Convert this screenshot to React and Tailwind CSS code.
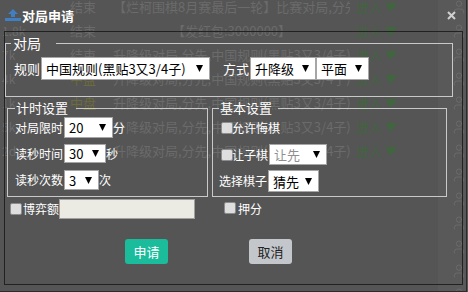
import { User } from "lucide-react";

const bgRows = [
    { lvl: "", st: "结束", desc: "【烂柯围棋8月赛最后一轮】比赛对局,分先" },
    { lvl: "1.8k", st: "结束", desc: "【发红包:3000000】" },
    { lvl: "7k", st: "结束", desc: "升降级对局,分先,中国规则(黑贴3又3/4子)" },
    { lvl: "4k", st: "中盘", desc: "升降级对局,分先,中国规则(黑贴3又3/4子)", mid: true },
    { lvl: "1k", st: "中盘", desc: "升降级对局,分先,中国规则(黑贴3又3/4子)", mid: true },
    { lvl: "5k", st: "中盘", desc: "升降级对局,分先,中国规则(黑贴3又3/4子)", mid: true },
    { lvl: "2d", st: "中盘", desc: "升降级对局,分先,中国规则(黑贴3又3/4子)", mid: true },
    {}, {}, {}, {}, {}, {},
];

function Background() {
    return (
        <div className="-mt-[5px] flex flex-col text-[13px] leading-[24px] text-[#6b6b6b]">
            {bgRows.map((row, i) => (
                <div key={i} className="flex h-[24px] items-center whitespace-nowrap">
                    <span className="w-[60px] pl-[2px] text-[12px]">{row.lvl}</span>
                    <span className={`w-[53px] pl-[10px] ${row.mid ? "text-[#6c6b3c]" : ""}`}>{row.st}</span>
                    <span className="w-[237px] overflow-hidden text-center">{row.desc}</span>
                    <span className="flex w-[88px] items-center gap-[3px] pl-[6px] text-[#41653f]">
                        {row.st && (
                            <>
                                进入
                                <svg width="12" height="9" viewBox="0 0 12 9">
                                    <polygon points="0,0 12,0 6,9" fill="#41653f" />
                                </svg>
                            </>
                        )}
                    </span>
                    <span className="flex h-full flex-1 items-center justify-end bg-[#595959] pr-[1px]">
                        <User size={16} strokeWidth={1.2} color="#6e6e6e" />
                    </span>
                </div>
            ))}
        </div>
    );
}

function Arrow() {
    return (
        <svg width="7" height="7" viewBox="0 0 7 7">
            <polygon points="0,0 7,0 3.5,7" fill="#000" />
        </svg>
    );
}

function Select({ value, size, muted = false }) {
    return (
        <span
            className={`inline-flex shrink-0 items-center justify-between border border-[#a6a6a6] bg-white pl-[4px] pr-[6px] text-[13px] leading-none ${size} ${muted ? "text-[#8f8f8f]" : "text-black"}`}
        >
            <span>{value}</span>
            <Arrow />
        </span>
    );
}

function Checkbox() {
    return <span className="inline-block h-[12px] w-[12px] shrink-0 rounded-[2px] border border-[#8c8c8c] bg-[#dedede]" />;
}

function Dialog() {
    return (
        <div className="flex flex-col">
            <div className="flex h-[31px] items-center pl-[5px] pr-[10px]">
                <svg width="16" height="15" viewBox="0 0 16 15">
                    <polygon points="8,1 13,6 10,6 10,9 6,9 6,6 3,6" fill="#3f7fc2" />
                    <rect x="0" y="10" width="16" height="3" fill="#3f7fc2" />
                </svg>
                <span className="ml-[1px] text-[13px] font-bold leading-none text-white">对局申请</span>
                <svg className="ml-auto" width="9" height="9" viewBox="0 0 9 9">
                    <path d="M1 1 L8 8 M8 1 L1 8" stroke="#d0d0d0" strokeWidth="2" />
                </svg>
            </div>

            <div className="ml-[4px] h-[254px] w-[459px] border border-[#222]">
                <fieldset className="mt-[3px] w-[448px] border border-[#c9c9c9] pb-[16px] pl-[5px]">
                    <legend className="pl-[2px] pr-[15px] text-[14px] leading-[16px] text-white">对局</legend>
                    <div className="mt-[6px] flex h-[23px] items-center pl-[3px] text-[13px] text-white">
                        <span className="w-[27px]">规则</span>
                        <Select value="中国规则(黑贴3又3/4子)" size="h-[23px] w-[169px]" />
                        <span className="ml-[13px] w-[27px]">方式</span>
                        <Select value="升降级" size="h-[23px] w-[66px]" />
                        <Select value="平面" size="h-[23px] w-[53px]" />
                    </div>
                </fieldset>

                <div className="mt-[3px] flex">
                    <fieldset className="ml-[2px] w-[201px] border border-[#c9c9c9] pb-[6px] pl-[7px]">
                        <legend className="pl-[1px] pr-[8px] text-[13px] leading-[16px] text-white">计时设置</legend>
                        <div className="flex flex-col text-[12px] text-white">
                            <div className="mt-[1px] flex h-[21px] items-center">
                                <span className="w-[49px]">对局限时</span>
                                <Select value="20" size="h-[21px] w-[49px]" />
                                <span>分</span>
                            </div>
                            <div className="mt-[6px] flex h-[19px] items-center">
                                <span className="w-[49px]">读秒时间</span>
                                <Select value="30" size="h-[19px] w-[42px]" />
                                <span>秒</span>
                            </div>
                            <div className="mt-[7px] flex h-[20px] items-center">
                                <span className="w-[49px]">读秒次数</span>
                                <Select value="3" size="h-[20px] w-[35px]" />
                                <span>次</span>
                            </div>
                        </div>
                    </fieldset>

                    <fieldset className="ml-[4px] w-[235px] border border-[#c9c9c9] pb-[4px] pl-[6px]">
                        <legend className="pl-[1px] pr-[6px] text-[13px] leading-[16px] text-white">基本设置</legend>
                        <div className="flex flex-col text-[12px] text-white">
                            <div className="mt-[1px] flex h-[21px] items-center pl-[2px]">
                                <Checkbox />
                                <span className="ml-[-1px]">允许悔棋</span>
                            </div>
                            <div className="mt-[6px] flex h-[21px] items-center pl-[2px]">
                                <Checkbox />
                                <span className="ml-[-1px] w-[37px]">让子棋</span>
                                <Select value="让先" size="h-[21px] w-[58px]" muted />
                            </div>
                            <div className="mt-[5px] flex h-[22px] items-center">
                                <span className="w-[49px]">选择棋子</span>
                                <Select value="猜先" size="h-[22px] w-[51px]" />
                            </div>
                        </div>
                    </fieldset>
                </div>

                <div className="mt-[2px] flex h-[20px] items-center pl-[5px] text-[12px] text-white">
                    <Checkbox />
                    <span className="ml-[1px] w-[36px]">博弈额</span>
                    <span className="h-[20px] w-[136px] border border-[#a0a0a0] bg-[#ebebe4]" />
                    <span className="ml-[29px]">
                        <Checkbox />
                    </span>
                    <span className="ml-[2px]">押分</span>
                </div>

                <div className="mt-[20px] flex text-[13px]">
                    <button className="ml-[120px] h-[25px] w-[43px] rounded-[3px] bg-[#1abc9c] text-white">申请</button>
                    <button className="ml-[81px] h-[25px] w-[43px] rounded-[3px] bg-[#c3c7cc] text-[#222]">取消</button>
                </div>
            </div>
        </div>
    );
}

export default function App() {
    return (
        <div className="relative h-[292px] w-[468px] overflow-hidden bg-[#555555] font-['Noto_Sans_CJK_SC','Liberation_Sans',sans-serif]">
            <Background />
            <div className="absolute left-0 top-0 h-[292px] w-[467px] border-b border-r border-[#2b2b2b]">
                <Dialog />
            </div>
        </div>
    );
}
